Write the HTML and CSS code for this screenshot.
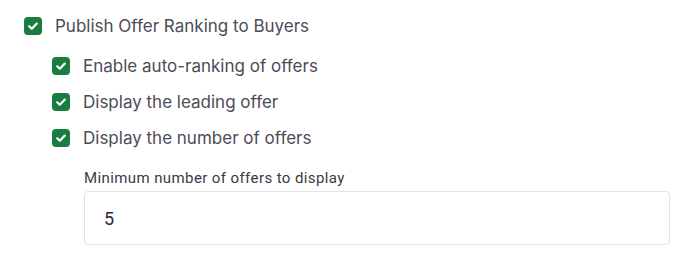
FILE: index.html
```html
<!DOCTYPE html>
<html>
<head>
<meta charset="utf-8">
<link rel="stylesheet" href="styles.css">
</head>
<body>
<div class="settings">
  <label class="check check-main">
    <span class="box"><svg viewBox="0 0 18 18" width="18" height="18"><path d="M5.2 9.3 L7.8 11.8 L12.8 6.6" fill="none" stroke="#fff" stroke-width="2.2" stroke-linecap="round" stroke-linejoin="round"/></svg></span>
    <span class="text">Publish Offer Ranking to Buyers</span>
  </label>
  <div class="sub">
    <label class="check">
      <span class="box"><svg viewBox="0 0 18 18" width="18" height="18"><path d="M5.2 9.3 L7.8 11.8 L12.8 6.6" fill="none" stroke="#fff" stroke-width="2.2" stroke-linecap="round" stroke-linejoin="round"/></svg></span>
      <span class="text">Enable auto-ranking of offers</span>
    </label>
    <label class="check">
      <span class="box"><svg viewBox="0 0 18 18" width="18" height="18"><path d="M5.2 9.3 L7.8 11.8 L12.8 6.6" fill="none" stroke="#fff" stroke-width="2.2" stroke-linecap="round" stroke-linejoin="round"/></svg></span>
      <span class="text">Display the leading offer</span>
    </label>
    <label class="check">
      <span class="box"><svg viewBox="0 0 18 18" width="18" height="18"><path d="M5.2 9.3 L7.8 11.8 L12.8 6.6" fill="none" stroke="#fff" stroke-width="2.2" stroke-linecap="round" stroke-linejoin="round"/></svg></span>
      <span class="text">Display the number of offers</span>
    </label>
    <div class="field">
      <div class="field-label">Minimum number of offers to display</div>
      <div class="input">5</div>
    </div>
  </div>
</div>
</body>
</html>
```
FILE: styles.css
```css
html, body {
  margin: 0;
  padding: 0;
  background: #ffffff;
}
.settings {
  padding: 8px 18px 0 24px;
  display: flex;
  flex-direction: column;
}
.check {
  display: flex;
  align-items: center;
  gap: 13px;
  height: 36px;
  font-family: Inter, "Noto Sans", sans-serif;
  font-size: 17px;
  color: #4c4c58;
}
.check-main {
  margin-bottom: 4px;
}
.box {
  width: 18px;
  height: 18px;
  border-radius: 4px;
  background: #1a7d40;
  display: flex;
  flex-shrink: 0;
}
.sub {
  padding-left: 28px;
  display: flex;
  flex-direction: column;
}
.field {
  padding-left: 32px;
  margin-top: 12px;
  display: flex;
  flex-direction: column;
}
.field-label {
  font-family: Roboto, "Liberation Sans", sans-serif;
  font-size: 15px;
  letter-spacing: 0.4px;
  line-height: 20px;
  color: #3a3a44;
  margin-bottom: 3px;
}
.input {
  height: 52px;
  border: 1px solid #e2e2e2;
  border-radius: 4px;
  box-sizing: content-box;
  padding-left: 19px;
  display: flex;
  align-items: center;
  font-family: Roboto, "Liberation Sans", sans-serif;
  font-size: 18px;
  color: #2a2a30;
}
```
